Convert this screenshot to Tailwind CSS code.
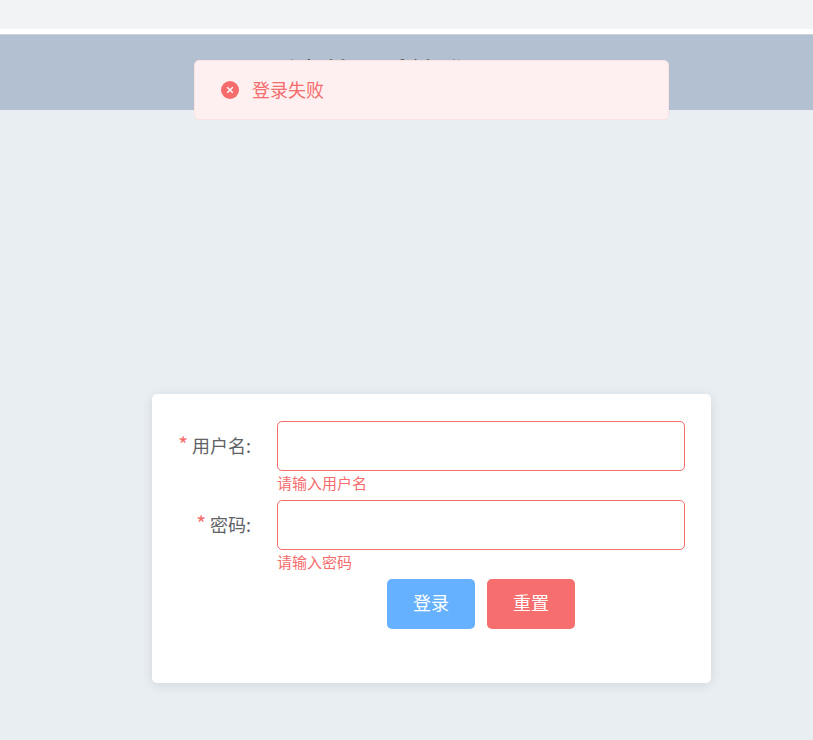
<!DOCTYPE html>
<html lang="zh">
<head>
    <meta charset="UTF-8">
    <title>登录</title>
    <script src="https://cdn.jsdelivr.net/npm/@tailwindcss/browser@4"></script>
</head>
<body class="h-[740px] overflow-hidden bg-[#e9eef3] font-['Noto_Sans_CJK_SC','Liberation_Sans',sans-serif]">
    <!-- Top strip -->
    <div class="h-[29px] bg-[#f2f3f5]"></div>
    <div class="h-[5px] bg-white"></div>

    <!-- Header -->
    <header class="h-[76px] border-t border-[#cfd3d8] bg-[#b3c0d1] text-center text-[28px] leading-[60px] text-[#333]">
        <h1 class="pl-[6px] pt-[7px] font-bold">后台管理系统登录页面</h1>
    </header>

    <!-- Message -->
    <div class="absolute left-[194px] top-[60px] flex h-[60px] w-[475px] items-center rounded-[5px] border border-[#fde2e2] bg-[#fef0f0] pl-[26px]">
        <svg class="h-[18px] w-[18px]" viewBox="0 0 18 18">
            <circle cx="9" cy="9" r="9" fill="#f56c6c" />
            <path d="M6.2 6.2l5.6 5.6M11.8 6.2l-5.6 5.6" stroke="#fff" stroke-width="1.5" />
        </svg>
        <span class="mb-[2px] ml-[13px] text-lg text-[#f56c6c]">登录失败</span>
    </div>

    <!-- Login card -->
    <main class="ml-[152px] mt-[284px] h-[289px] w-[559px] rounded-[5px] bg-white pl-[27px] pr-[26px] pt-[27px] shadow-[0_2px_12px_rgba(0,0,0,0.1)]">
        <form class="text-[#606266]">
            <div class="flex">
                <label class="-ml-[10px] w-[108px] whitespace-nowrap pr-[26px] text-right text-lg leading-[46px]"><span class="text-[21px] text-[#f56c6c]">*</span> 用户名:</label>
                <div class="flex-1">
                    <div class="h-[50px] rounded-[5px] border border-[#f56c6c] bg-white"></div>
                    <p class="h-[29px] pt-[2px] text-[15px] leading-[20px] text-[#f56c6c]">请输入用户名</p>
                </div>
            </div>
            <div class="flex">
                <label class="-ml-[10px] w-[108px] whitespace-nowrap pr-[26px] text-right text-lg leading-[46px]"><span class="text-[21px] text-[#f56c6c]">*</span> 密码:</label>
                <div class="flex-1">
                    <div class="h-[50px] rounded-[5px] border border-[#f56c6c] bg-white"></div>
                    <p class="h-[29px] pt-[2px] text-[15px] leading-[20px] text-[#f56c6c]">请输入密码</p>
                </div>
            </div>
            <div class="flex gap-3 pl-[208px]">
                <button type="button" class="h-[50px] w-[88px] rounded-[5px] bg-[#66b1ff] pb-[4px] text-lg text-white">登录</button>
                <button type="button" class="h-[50px] w-[88px] rounded-[5px] bg-[#f66e6e] pb-[4px] text-lg text-white">重置</button>
            </div>
        </form>
    </main>
</body>
</html>
